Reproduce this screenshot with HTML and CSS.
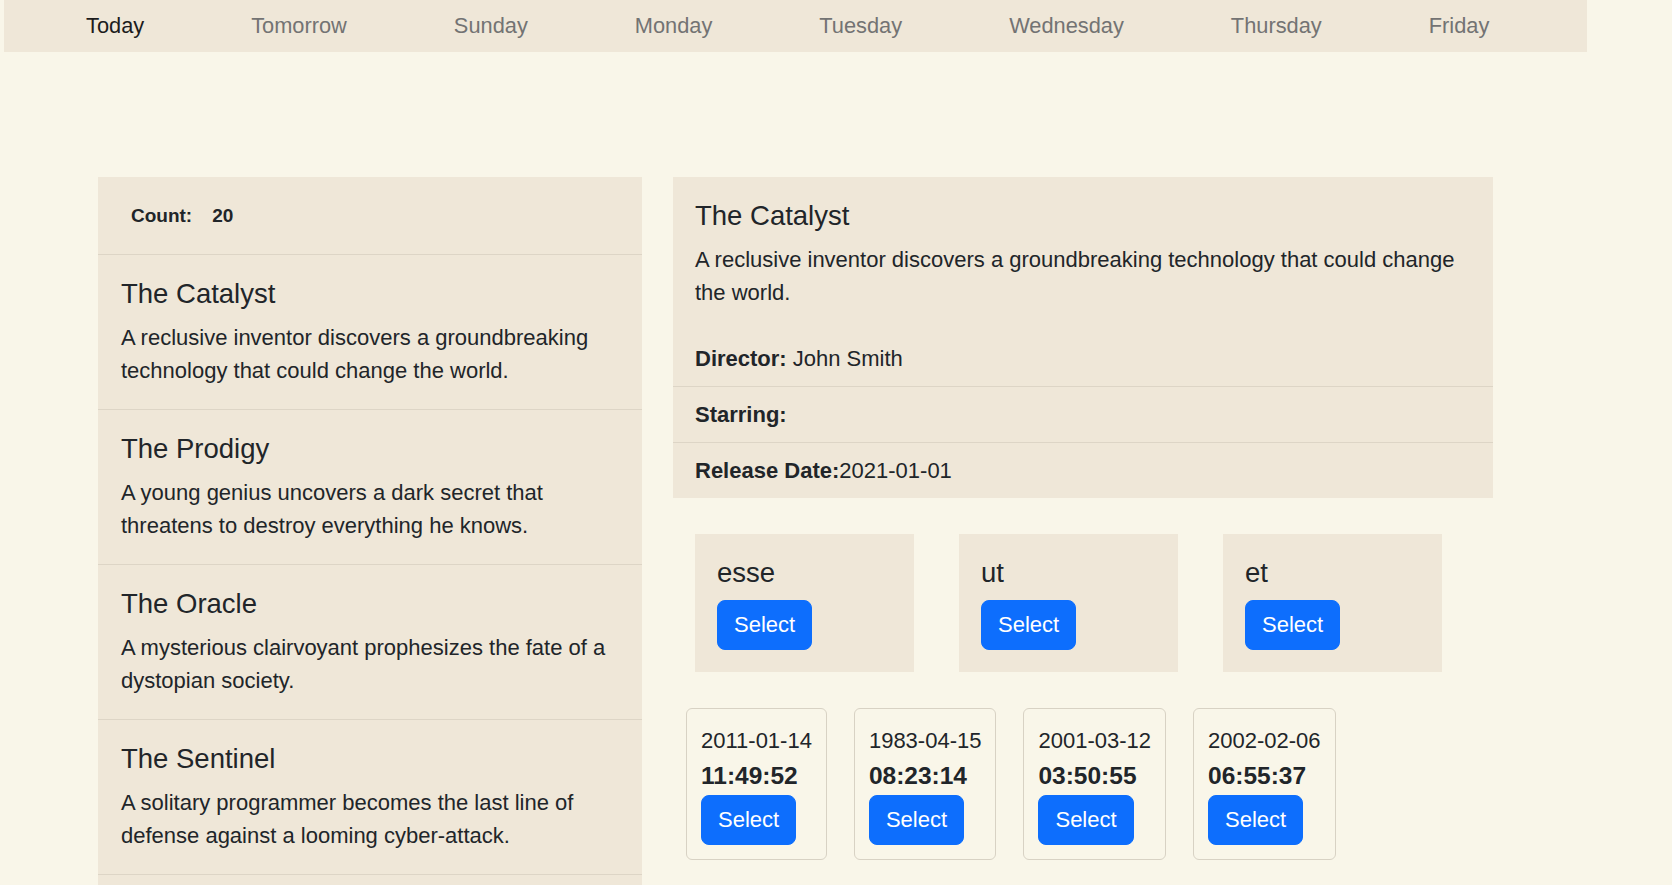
FILE: index.html
```html
<!DOCTYPE html>
<html lang="en">
<head>
<meta charset="utf-8">
<title>Schedule</title>
<link rel="stylesheet" href="styles.css">
</head>
<body>
<nav class="nav">
  <a class="nav-link active">Today</a>
  <a class="nav-link">Tomorrow</a>
  <a class="nav-link">Sunday</a>
  <a class="nav-link">Monday</a>
  <a class="nav-link">Tuesday</a>
  <a class="nav-link">Wednesday</a>
  <a class="nav-link">Thursday</a>
  <a class="nav-link">Friday</a>
</nav>
<main class="main">
  <section class="list-panel">
    <div class="count-row"><span class="count-label">Count:</span><span class="count-value">20</span></div>
    <div class="movie-item">
      <h3 class="movie-title">The Catalyst</h3>
      <p class="movie-desc">A reclusive inventor discovers a groundbreaking technology that could change the world.</p>
    </div>
    <div class="movie-item">
      <h3 class="movie-title">The Prodigy</h3>
      <p class="movie-desc">A young genius uncovers a dark secret that threatens to destroy everything he knows.</p>
    </div>
    <div class="movie-item">
      <h3 class="movie-title">The Oracle</h3>
      <p class="movie-desc">A mysterious clairvoyant prophesizes the fate of a dystopian society.</p>
    </div>
    <div class="movie-item">
      <h3 class="movie-title">The Sentinel</h3>
      <p class="movie-desc">A solitary programmer becomes the last line of defense against a looming cyber-attack.</p>
    </div>
    <div class="movie-item">
      <h3 class="movie-title">The Visionary</h3>
      <p class="movie-desc">An ambitious architect designs a city that will reshape the future of humanity.</p>
    </div>
  </section>
  <section class="detail-col">
    <div class="detail-card">
      <div class="detail-body">
        <h3 class="movie-title">The Catalyst</h3>
        <p class="movie-desc">A reclusive inventor discovers a groundbreaking technology that could change the world.</p>
      </div>
      <div class="detail-row"><b>Director:</b> John Smith</div>
      <div class="detail-row"><b>Starring:</b></div>
      <div class="detail-row"><b>Release Date:</b>2021-01-01</div>
    </div>
    <div class="tag-row">
      <div class="tag-card"><div class="tag-name">esse</div><button class="btn">Select</button></div>
      <div class="tag-card"><div class="tag-name">ut</div><button class="btn">Select</button></div>
      <div class="tag-card"><div class="tag-name">et</div><button class="btn">Select</button></div>
    </div>
    <div class="time-row">
      <div class="time-card"><div class="time-date">2011-01-14</div><div class="time-clock">11:49:52</div><button class="btn">Select</button></div>
      <div class="time-card"><div class="time-date">1983-04-15</div><div class="time-clock">08:23:14</div><button class="btn">Select</button></div>
      <div class="time-card"><div class="time-date">2001-03-12</div><div class="time-clock">03:50:55</div><button class="btn">Select</button></div>
      <div class="time-card"><div class="time-date">2002-02-06</div><div class="time-clock">06:55:37</div><button class="btn">Select</button></div>
    </div>
  </section>
</main>
</body>
</html>
```
FILE: styles.css
```css
* { box-sizing: border-box; }
body {
  margin: 0;
  background: #f9f6e9;
  font-family: "Liberation Sans", Arial, sans-serif;
  color: #212529;
}
.nav {
  margin-left: 4px;
  width: 1583px;
  height: 52px;
  background: #efe7d8;
  display: flex;
  align-items: center;
  gap: 107px;
  padding-left: 82px;
}
.nav-link {
  font-size: 21.8px;
  color: #737373;
  text-decoration: none;
}
.nav-link.active { color: #1c1c1c; }
.main {
  display: flex;
  align-items: flex-start;
  gap: 31px;
  padding: 125px 0 0 98px;
}
.list-panel {
  width: 544px;
  background: #efe7d8;
  flex: none;
}
.count-row {
  height: 78px;
  display: flex;
  align-items: center;
  gap: 20px;
  padding-left: 33px;
  font-size: 19px;
  font-weight: bold;
  border-bottom: 1px solid #ddd5c6;
}
.movie-item {
  padding: 22px 23px;
  border-bottom: 1px solid #ddd5c6;
}
.movie-title {
  font-size: 27.5px;
  font-weight: normal;
  line-height: 1.2;
  margin: 0 0 11px;
}
.movie-desc {
  font-size: 22px;
  line-height: 1.5;
  margin: 0;
}
.detail-col {
  width: 820px;
  flex: none;
}
.detail-card { background: #efe7d8; }
.detail-body { padding: 21.5px 22px 22px; }
.detail-row {
  font-size: 22px;
  line-height: 1.5;
  padding: 11px 22px;
}
.detail-row + .detail-row { border-top: 1px solid #ddd5c6; }
.tag-row {
  display: flex;
  gap: 45px;
  margin-top: 36px;
  padding-left: 22px;
}
.tag-card {
  width: 219px;
  background: #efe7d8;
  padding: 22px;
}
.tag-name {
  font-size: 27.5px;
  line-height: 1.2;
  margin-bottom: 11px;
}
.btn {
  display: block;
  background: #0d6efd;
  border: 1px solid #0d6efd;
  border-radius: 8px;
  color: #fff;
  font-family: "Liberation Sans", Arial, sans-serif;
  font-size: 22px;
  line-height: 33px;
  padding: 7.5px 16px;
}
.time-row {
  display: flex;
  gap: 27px;
  margin-top: 36px;
  padding-left: 13px;
}
.time-card {
  border: 1px solid #d8d2c4;
  border-radius: 6px;
  padding: 15px 14px 14.5px;
}
.time-date {
  font-size: 22px;
  line-height: 1.5;
}
.time-clock {
  font-size: 24.5px;
  font-weight: bold;
  line-height: 38px;
}
```
